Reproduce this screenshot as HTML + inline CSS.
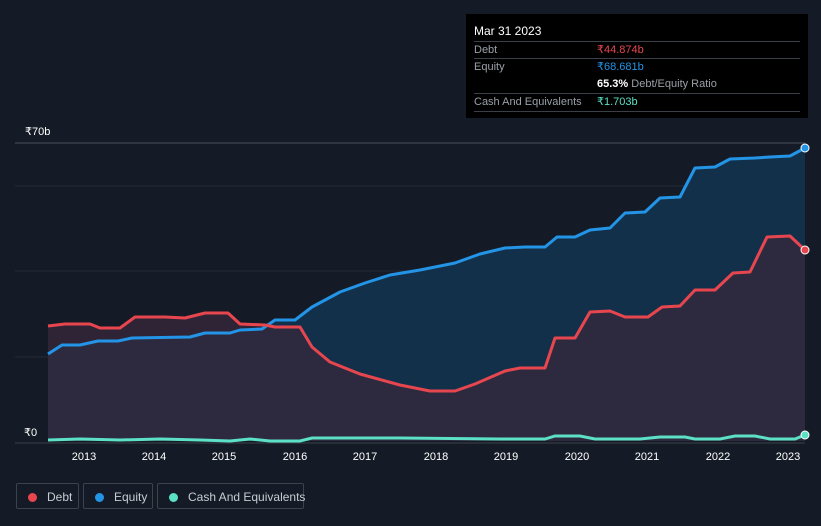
<!DOCTYPE html>
<html><head><meta charset="utf-8"><style>
body{margin:0;width:821px;height:526px;background:#151b26;font-family:"Liberation Sans",sans-serif;overflow:hidden;position:relative}
.tt{position:absolute;left:466px;top:14px;width:342px;height:104px;background:#000;color:#fff;font-size:11px}
.row{position:absolute;left:8px;width:326px;border-top:1px solid #3a3f48;height:17px;line-height:17px}
.lab{color:#9aa0a8}
.leg{position:absolute;top:483px;height:26px;border:1px solid #3d434d;border-radius:2px;color:#c8ccd2;font-size:12px;line-height:26px;box-sizing:border-box;white-space:nowrap}
.dot{display:inline-block;width:9px;height:9px;border-radius:50%;margin:0 10px 0 11px;vertical-align:-1px}
</style></head><body>
<svg width="821" height="526" style="position:absolute;left:0;top:0">
<line x1="15" y1="143" x2="805" y2="143" stroke="#4a505a"/>
<line x1="15" y1="186" x2="805" y2="186" stroke="#242b37"/>
<line x1="15" y1="271" x2="805" y2="271" stroke="#242b37"/>
<line x1="15" y1="357" x2="805" y2="357" stroke="#242b37"/>
<path d="M48,354 L62,345 80,345 98,341 118,341 132,338 190,337 205,333 230,333 240,330 262,329 275,320 295,320 312,307 340,292 365,283 390,275 420,270 455,263 480,254 505,248 525,247 545,247 557,237 575,237 590,230 610,228 625,213 645,212 660,198 680,197 695,168 715,167 730,159 755,158 770,157 790,156 805,148 L805,441 48,441Z" fill="#12304a"/>
<path d="M48,326 L65,324 90,324 100,328 120,328 135,317 165,317 185,318 205,313 228,313 240,324 265,325 275,327 300,327 312,347 330,362 360,374 400,385 430,391 455,391 475,384 505,371 520,368 545,368 555,338 575,338 590,312 610,311 625,317 648,317 662,307 680,306 695,290 715,290 733,273 750,272 767,237 790,236 805,250 L805,441 48,441Z" fill="rgba(55,40,60,0.75)"/>
<path d="M48,354 L62,345 80,345 98,341 118,341 132,338 190,337 205,333 230,333 240,330 262,329 275,320 295,320 312,307 340,292 365,283 390,275 420,270 455,263 480,254 505,248 525,247 545,247 557,237 575,237 590,230 610,228 625,213 645,212 660,198 680,197 695,168 715,167 730,159 755,158 770,157 790,156 805,148" fill="none" stroke="#2394e6" stroke-width="3" stroke-linejoin="round"/>
<path d="M48,326 L65,324 90,324 100,328 120,328 135,317 165,317 185,318 205,313 228,313 240,324 265,325 275,327 300,327 312,347 330,362 360,374 400,385 430,391 455,391 475,384 505,371 520,368 545,368 555,338 575,338 590,312 610,311 625,317 648,317 662,307 680,306 695,290 715,290 733,273 750,272 767,237 790,236 805,250" fill="none" stroke="#e8464f" stroke-width="3" stroke-linejoin="round"/>
<path d="M48,440 L80,439 120,440 160,439 200,440 230,441 250,439 270,441 300,441 312,438 400,438 500,439 545,439 555,436 580,436 595,439 640,439 660,437 685,437 695,439 720,439 735,436 755,436 770,439 795,439 805,435" fill="none" stroke="#5ce0c6" stroke-width="3"/>
<line x1="15" y1="443" x2="805" y2="443" stroke="#3a404a"/>
<circle cx="805" cy="148" r="4" fill="#2394e6" stroke="#fff" stroke-width="1"/>
<circle cx="805" cy="250" r="4" fill="#e8464f" stroke="#fff" stroke-width="1"/>
<circle cx="805" cy="435" r="4" fill="#5ce0c6" stroke="#fff" stroke-width="1"/>
<g fill="#fff" font-size="11" text-anchor="middle" font-family="Liberation Sans,sans-serif">
<text x="84" y="460">2013</text><text x="154" y="460">2014</text><text x="224" y="460">2015</text><text x="295" y="460">2016</text><text x="365" y="460">2017</text><text x="436" y="460">2018</text><text x="506" y="460">2019</text><text x="577" y="460">2020</text><text x="647" y="460">2021</text><text x="718" y="460">2022</text><text x="788" y="460">2023</text>
</g>
<text x="25" y="135" fill="#fff" font-size="11">₹70b</text>
<text x="24" y="436" fill="#fff" font-size="11">₹0</text>
</svg>
<div class="tt">
<div style="position:absolute;left:8px;top:10px;font-size:12px">Mar 31 2023</div>
<div class="row" style="top:27px"><span class="lab">Debt</span><span style="position:absolute;left:123px;color:#e8464f">₹44.874b</span></div>
<div class="row" style="top:44px"><span class="lab">Equity</span><span style="position:absolute;left:123px;color:#2394e6">₹68.681b</span></div>
<div style="position:absolute;left:131px;top:62px;line-height:17px"><b>65.3%</b> <span class="lab">Debt/Equity Ratio</span></div>
<div class="row" style="top:79px;border-bottom:1px solid #3a3f48"><span class="lab">Cash And Equivalents</span><span style="position:absolute;left:123px;color:#5ce0c6">₹1.703b</span></div>
</div>
<div class="leg" style="left:16px;width:63px"><span class="dot" style="background:#e8464f"></span>Debt</div>
<div class="leg" style="left:83px;width:70px"><span class="dot" style="background:#2394e6"></span>Equity</div>
<div class="leg" style="left:157px;width:147px"><span class="dot" style="background:#5ce0c6"></span>Cash And Equivalents</div>
</body></html>
